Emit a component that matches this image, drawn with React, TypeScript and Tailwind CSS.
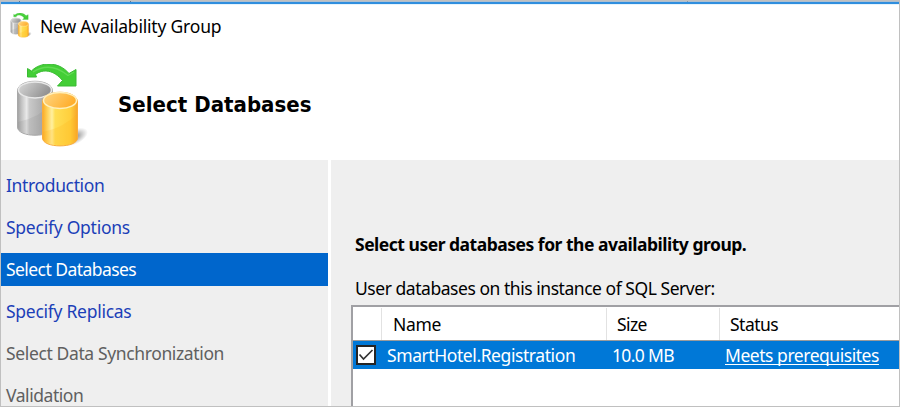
import React from "react";

function DatabasesIcon({ className, id }: { className: string; id: string }) {
  return (
    <svg className={className} viewBox="0 0 72 84" fill="none">
      <defs>
        <linearGradient id={id + "g"} x1="0" x2="1">
          <stop offset="0" stopColor="#a0a0a0" />
          <stop offset="0.12" stopColor="#c4c4c4" />
          <stop offset="0.26" stopColor="#e9e9e9" />
          <stop offset="0.34" stopColor="#c9c9c9" />
          <stop offset="1" stopColor="#979797" />
        </linearGradient>
        <linearGradient id={id + "gt"} x1="0" x2="1" y2="0.4">
          <stop offset="0" stopColor="#d9d9d9" />
          <stop offset="1" stopColor="#929292" />
        </linearGradient>
        <linearGradient id={id + "y"} x1="0" x2="1">
          <stop offset="0" stopColor="#f9aa28" />
          <stop offset="0.12" stopColor="#ffcd52" />
          <stop offset="0.27" stopColor="#fff0a0" />
          <stop offset="0.36" stopColor="#ffdf55" />
          <stop offset="0.8" stopColor="#ffcf3c" />
          <stop offset="1" stopColor="#f7a52b" />
        </linearGradient>
        <linearGradient id={id + "yt"} x1="0" x2="1" y2="0.4">
          <stop offset="0" stopColor="#ffd784" />
          <stop offset="1" stopColor="#ffae2c" />
        </linearGradient>
        <radialGradient id={id + "s"}>
          <stop offset="0" stopColor="#555" stopOpacity="0.8" />
          <stop offset="1" stopColor="#777" stopOpacity="0" />
        </radialGradient>
      </defs>
      <ellipse cx="58" cy="73" rx="15" ry="7.500" transform="rotate(-25 58 73)" fill={`url(#${id}s)`} />
      <path d="M1.500 27C1.500 14 36.500 14 36.500 27V63C36.500 74 1.500 74 1.500 63Z" fill={`url(#${id}g)`} stroke="#a8a8a8" />
      <path d="M2 58Q23 54 36 39V64Q30 71 19 71Q2 70 2 62Z" fill="#888" opacity="0.18" />
      <ellipse cx="19" cy="26" rx="16.500" ry="8" fill={`url(#${id}gt)`} stroke="#e8e8e8" strokeWidth="1.500" />
      <path d="M26.500 38C26.500 25 61.500 25 61.500 38V74C61.500 84.500 26.500 84.500 26.500 74Z" fill={`url(#${id}y)`} stroke="#f9ac3c" />
      <path d="M27 68Q47 64 61 50V75Q56 81 44 81Q27 80 27 73Z" fill="#ffad16" opacity="0.2" />
      <ellipse cx="44" cy="36.500" rx="16.500" ry="8" fill={`url(#${id}yt)`} stroke="#fff0bd" strokeWidth="1.500" />
      <path d="M11.500 4.500L15.500 7C24-2 42-3.500 53 9.500L60 5.500V22H41.500L46.500 16.500C38 6 27 4.500 19.500 10.500L20.500 13H11.500Z" fill="#43ce36" stroke="#3bbb34" strokeWidth="1" strokeLinejoin="round" />
      <path d="M17 8Q34-3 52 11.500L58 8" stroke="#7be66b" strokeWidth="1.300" opacity="0.55" />
    </svg>
  );
}

const steps = [
  { label: "Introduction", style: "text-[#1c3fb8] tracking-[-0.36px]" },
  { label: "Specify Options", style: "text-[#1c3fb8] tracking-[-0.25px]" },
  { label: "Select Databases", style: "text-white bg-[#0066cc] tracking-[-0.56px]" },
  { label: "Specify Replicas", style: "text-[#1c3fb8] tracking-[-0.27px]" },
  { label: "Select Data Synchronization", style: "text-[#606060] tracking-[-0.37px]" },
  { label: "Validation", style: "text-[#606060] tracking-[-0.45px]" },
];

export default function App() {
  return (
    <div className="flex h-[407px] w-[900px] flex-col overflow-hidden border border-[#c0c0c0] bg-white font-['Noto_Sans',sans-serif] text-[17.5px] leading-6 text-black">
      <div className="flex h-[3px] shrink-0 flex-col">
        <div className="flex h-px bg-[#aebfd0]">
          <i className="ml-[18px] h-px w-px bg-[#64788b]" />
          <i className="ml-[110px] h-px w-px bg-[#64788b]" />
          <i className="ml-[556px] h-px w-px bg-[#8797a7]" />
        </div>
        <div className="h-0.5 bg-[#2f8ede]" />
      </div>
      <div className="flex h-[44px] shrink-0 items-center border-t border-[#e7f4fc] pb-0.5 pl-[9px]">
        <DatabasesIcon id="small" className="h-[25px] w-[22px]" />
        <span className="ml-2 whitespace-nowrap tracking-[-0.2px]">New Availability Group</span>
      </div>
      <header className="flex h-[112px] shrink-0 pl-[15px] pt-4">
        <DatabasesIcon id="large" className="h-[84px] w-[72px] shrink-0" />
        <h1 className="ml-[30px] mt-[27px] whitespace-nowrap font-['DejaVu_Sans_Condensed','DejaVu_Sans',sans-serif] text-[22px] font-bold leading-7 tracking-[0.03px]">Select Databases</h1>
      </header>
      <div className="flex min-h-0 flex-1 bg-[#efefef]">
        <nav className="flex w-[330px] shrink-0 flex-col gap-[9px] border-r-[3px] border-white pt-[9px]">
          {steps.map((step) => (
            <div key={step.label} className={`flex h-[33px] shrink-0 items-center whitespace-nowrap pb-0.5 pl-[5px] ${step.style}`}>{step.label}</div>
          ))}
        </nav>
        <main className="flex min-w-0 flex-1 flex-col pl-5">
          <h2 className="ml-1 mt-[72px] whitespace-nowrap font-bold tracking-[-0.49px]">Select user databases for the availability group.</h2>
          <p className="ml-1 mt-5 whitespace-nowrap tracking-[-0.46px]">User databases on this instance of SQL Server:</p>
          <div className="mt-[5px] flex flex-1 flex-col border-l-2 border-t-2 border-[#a0a0a4] bg-white">
            <div className="grid h-[34px] shrink-0 grid-cols-[29px_225px_113px_1fr] items-center whitespace-nowrap border-b border-[#9b9b9b] pt-px tracking-[-0.35px]">
              <span className="h-full border-r border-[#e2e2e2]" />
              <span className="flex h-full items-center border-r border-[#e2e2e2] pl-[11px]">Name</span>
              <span className="flex h-full items-center border-r border-[#e2e2e2] pl-[10px] tracking-[-0.6px]">Size</span>
              <span className="pl-[10px] tracking-[-0.5px]">Status</span>
            </div>
            <div className="grid h-[28px] shrink-0 grid-cols-[29px_225px_113px_1fr] items-center whitespace-nowrap bg-[#0078d7] text-white">
              <span className="ml-[3px] flex h-5 w-5 items-center justify-center border-2 border-[#252525] bg-white">
                <svg viewBox="0 0 16 16" className="h-4 w-4" fill="none"><path d="M1.500 7.500L5.500 12L14.500 3" stroke="#333" strokeWidth="1.700" /></svg>
              </span>
              <span className="pl-[5px] tracking-[-0.42px]">SmartHotel.Registration</span>
              <span className="pl-[5px] tracking-[-0.65px]">10.0 MB</span>
              <span className="pl-[5px]"><a className="tracking-[-0.46px] underline decoration-1 underline-offset-2 [text-decoration-skip-ink:none]">Meets prerequisites</a></span>
            </div>
          </div>
        </main>
      </div>
    </div>
  );
}
